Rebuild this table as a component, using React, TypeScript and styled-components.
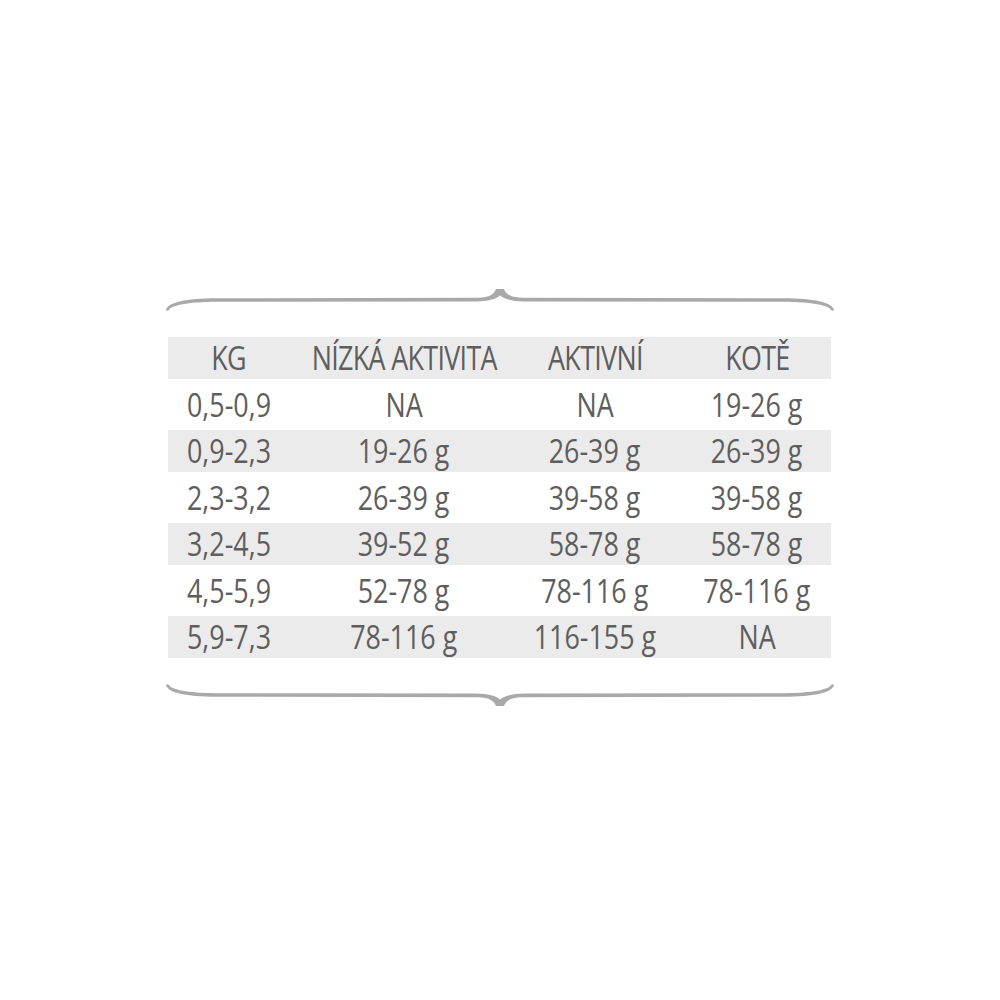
import styled, { createGlobalStyle } from "styled-components";

const GlobalStyle = createGlobalStyle`
  html, body {
    margin: 0;
    padding: 0;
    background: #ffffff;
  }
  body {
    font-family: "Open Sans", "DejaVu Sans Condensed", "Liberation Sans", sans-serif;
  }
`;

const header = ["KG", "NÍZKÁ AKTIVITA", "AKTIVNÍ", "KOTĚ"];

const rows = [
  ["0,5-0,9", "NA", "NA", "19-26 g"],
  ["0,9-2,3", "19-26 g", "26-39 g", "26-39 g"],
  ["2,3-3,2", "26-39 g", "39-58 g", "39-58 g"],
  ["3,2-4,5", "39-52 g", "58-78 g", "58-78 g"],
  ["4,5-5,9", "52-78 g", "78-116 g", "78-116 g"],
  ["5,9-7,3", "78-116 g", "116-155 g", "NA"],
];

const Brace = ({ flip }: { flip?: boolean }) => (
  <BraceSvg $flip={flip} width="668" height="26" viewBox="0 0 668 26">
    <path
      fill="#a9a9a9"
      d="M 0 24
         C 2 16, 20 12.5, 50 12.2
         L 312 11.8
         C 324 11.5, 328 8, 330 3
         L 338 3
         C 340 8, 344 11.5, 356 11.8
         L 618 12.2
         C 648 12.5, 666 16, 668 24
         Q 666.5 25.5, 665 24
         C 663 19.5, 646 16, 618 15.8
         L 358 15.5
         C 346 15.3, 338 13, 334 9.5
         C 330 13, 322 15.3, 310 15.5
         L 50 15.8
         C 22 16, 5 19.5, 3 24
         Q 1.5 25.5, 0 24 Z"
    />
  </BraceSvg>
);

export default function App() {
  return (
    <>
      <GlobalStyle />
      <Page>
        <Frame>
          <Brace />
          <Table>
            <Row $shaded>
              {header.map((h) => (
                <Cell key={h} $head>
                  <Label>{h}</Label>
                </Cell>
              ))}
            </Row>
            {rows.map((r, i) => (
              <Row key={r[0]} $shaded={i % 2 === 1}>
                {r.map((c, j) => (
                  <Cell key={j}>
                    <Label>{c}</Label>
                  </Cell>
                ))}
              </Row>
            ))}
          </Table>
          <Brace flip />
        </Frame>
      </Page>
    </>
  );
}

const Page = styled.div`
  width: 1000px;
  height: 1000px;
  padding-top: 286px;
  padding-left: 166px;
  box-sizing: border-box;
`;

const Frame = styled.div`
  width: 668px;
  display: flex;
  flex-direction: column;
  gap: 25px;
`;

const BraceSvg = styled.svg<{ $flip?: boolean }>`
  display: block;
  transform: ${(p) => (p.$flip ? "scaleY(-1)" : "none")};
`;

const Table = styled.div`
  width: 663px;
  margin-left: 2px;
  display: flex;
  flex-direction: column;
`;

const Row = styled.div<{ $shaded?: boolean }>`
  display: grid;
  grid-template-columns: 122px 228px 154px 159px;
  align-items: center;
  height: ${(p) => (p.$shaded ? "42px" : "51px")};
  background: ${(p) => (p.$shaded ? "#ebebeb" : "transparent")};
`;

const Cell = styled.div<{ $head?: boolean }>`
  text-align: center;
  color: #5e5e5e;
  font-size: 32px;
  line-height: 1;
  white-space: nowrap;
  letter-spacing: ${(p) => (p.$head ? "-0.8px" : "0")};

  &:last-child {
    padding-left: 11px;
  }
`;

const Label = styled.span`
  display: inline-block;
  transform: scaleX(0.84);
  transform-origin: center;
`;
